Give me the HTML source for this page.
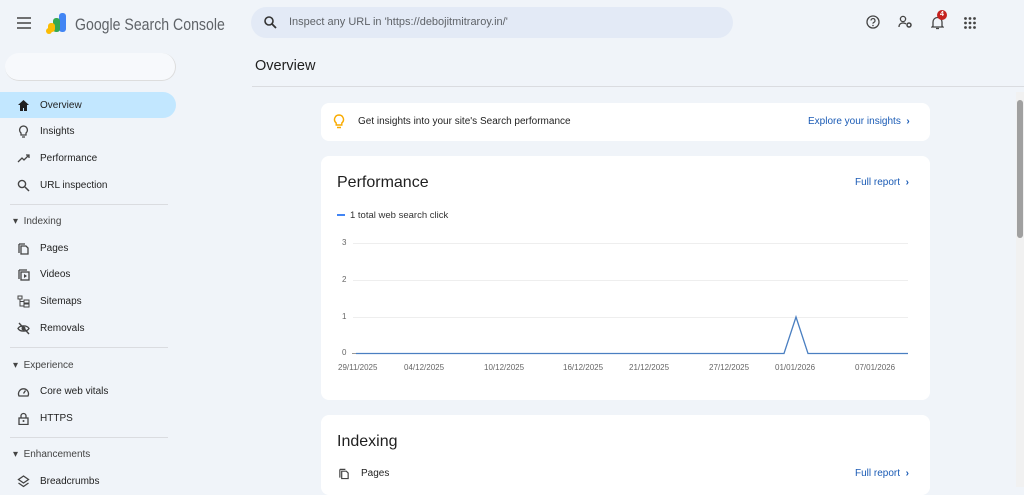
<!DOCTYPE html>
<html><head><meta charset="utf-8"><style>
*{box-sizing:border-box;margin:0;padding:0}
body{width:1024px;height:487px;overflow:hidden;background:#f0f4f9;font-family:"Liberation Sans",sans-serif;color:#1f1f1f;position:relative}
.abs{position:absolute}
.nav{position:absolute;left:0;width:176px;height:26px;display:flex;align-items:center;font-size:10px;color:#1f1f1f}
.nav svg{position:absolute;left:17px;width:13px;height:13px}
.nav span{position:absolute;left:40px}
.sec{position:absolute;left:13px;font-size:10px;color:#444}
.hr{position:absolute;left:10px;width:158px;height:1px;background:#dadce0}
.card{position:absolute;background:#fff;border-radius:8px;left:321px;width:609px}
.blue{color:#1a5bb5;font-size:10px}
.yl{position:absolute;left:342px;font-size:8px;color:#666}
.xl{position:absolute;top:363px;font-size:8px;color:#666}
</style></head><body>
<svg class="abs" style="left:17px;top:17px" width="14" height="12" viewBox="0 0 14 12"><path d="M0 1h14M0 6h14M0 11h14" stroke="#444" stroke-width="1.5"/></svg>
<svg class="abs" style="left:45px;top:13px" width="22" height="22" viewBox="0 0 22 22"><rect x="14" y="0" width="7" height="19" rx="3" fill="#4285f4"/><rect x="8" y="5" width="7" height="14" rx="3" fill="#34a853"/><rect x="3" y="10" width="7" height="9" rx="3" fill="#fbbc04"/><circle cx="4" cy="18" r="3" fill="#fbbc04"/></svg>
<div class="abs" style="left:75px;top:15px;font-size:17px;color:#5f6368;transform:scaleX(0.83);transform-origin:0 0;white-space:nowrap">Google Search Console</div>
<div class="abs" style="left:251px;top:7px;width:482px;height:31px;border-radius:16px;background:#e3eaf6"></div>
<svg class="abs" style="left:264px;top:16px" width="13" height="13" viewBox="0 0 13 13"><circle cx="5" cy="5" r="4" fill="none" stroke="#333" stroke-width="1.6"/><path d="M8 8l4 4" stroke="#333" stroke-width="1.8"/></svg>
<div class="abs" style="left:289px;top:16px;font-size:11px;color:#5f6368">Inspect any URL in 'https://debojitmitraroy.in/'</div>
<svg class="abs" style="left:866px;top:15px" width="14" height="14" viewBox="0 0 14 14"><circle cx="7" cy="7" r="6" fill="none" stroke="#444" stroke-width="1.3"/><path d="M5 5.5a2 2 0 1 1 2.5 2c-.5.2-.5.6-.5 1.2" fill="none" stroke="#444" stroke-width="1.2"/><circle cx="7" cy="10.5" r=".8" fill="#444"/></svg>
<svg class="abs" style="left:898px;top:15px" width="15" height="14" viewBox="0 0 15 14"><circle cx="5" cy="4" r="2.6" fill="none" stroke="#444" stroke-width="1.3"/><path d="M1 12c0-3 2-4 4-4s2.5.5 3 1" fill="none" stroke="#444" stroke-width="1.3"/><circle cx="11" cy="10" r="2" fill="none" stroke="#444" stroke-width="1.5"/></svg>
<svg class="abs" style="left:931px;top:15px" width="13" height="15" viewBox="0 0 13 15"><path d="M2 11V7a4.5 4.5 0 0 1 9 0v4l1 1H1z" fill="none" stroke="#444" stroke-width="1.3"/><path d="M5 13.5h3" stroke="#444" stroke-width="1.3"/></svg>
<div class="abs" style="left:937px;top:10px;width:10px;height:10px;border-radius:50%;background:#c5221f;color:#fff;font-size:7px;font-weight:bold;text-align:center;line-height:10px">4</div>
<svg class="abs" style="left:964px;top:17px" width="12" height="12" viewBox="0 0 12 12" fill="#444"><circle cx="1.5" cy="1.5" r="1.4"/><circle cx="6" cy="1.5" r="1.4"/><circle cx="10.5" cy="1.5" r="1.4"/><circle cx="1.5" cy="6" r="1.4"/><circle cx="6" cy="6" r="1.4"/><circle cx="10.5" cy="6" r="1.4"/><circle cx="1.5" cy="10.5" r="1.4"/><circle cx="6" cy="10.5" r="1.4"/><circle cx="10.5" cy="10.5" r="1.4"/></svg>
<div class="abs" style="left:5px;top:53px;width:171px;height:28px;border-radius:14px;background:#f7f9fc;border-right:1px solid #ddd;border-bottom:1px solid #ddd"></div>
<div class="abs" style="left:0;top:92px;width:176px;height:26px;border-radius:0 13px 13px 0;background:#c2e7ff"></div>
<div class="nav" style="top:92px"><svg viewBox="0 0 13 13"><path d="M6.5 1L1 6h2v6h3V9h1v3h3V6h2z" fill="#1f1f1f"/></svg><span>Overview</span></div>
<div class="nav" style="top:118px"><svg viewBox="0 0 13 13"><path d="M6.5 1a4 4 0 0 0-2.5 7v2h5V8a4 4 0 0 0-2.5-7zM5 12h3" fill="none" stroke="#444" stroke-width="1.3"/></svg><span>Insights</span></div>
<div class="nav" style="top:145px"><svg viewBox="0 0 13 13"><path d="M1 10l4-4 2 2 5-5M9 3h3v3" fill="none" stroke="#444" stroke-width="1.3"/></svg><span>Performance</span></div>
<div class="nav" style="top:172px"><svg viewBox="0 0 13 13"><circle cx="5" cy="5" r="3.6" fill="none" stroke="#444" stroke-width="1.4"/><path d="M8 8l4 4" stroke="#444" stroke-width="1.5"/></svg><span>URL inspection</span></div>
<div class="hr" style="top:204px"></div>
<div class="sec" style="top:216px">▾&nbsp; Indexing</div>
<div class="nav" style="top:235px"><svg viewBox="0 0 13 13"><path d="M2 2v9M2 2h6M4 4h5l2 2v6H4z" fill="none" stroke="#444" stroke-width="1.3"/></svg><span>Pages</span></div>
<div class="nav" style="top:261px"><svg viewBox="0 0 13 13"><path d="M2 2v9M2 2h8" fill="none" stroke="#444" stroke-width="1.3"/><rect x="4" y="4" width="8" height="8" fill="none" stroke="#444" stroke-width="1.3"/><path d="M7 6v4l3-2z" fill="#444"/></svg><span>Videos</span></div>
<div class="nav" style="top:288px"><svg viewBox="0 0 13 13"><rect x="1" y="1" width="4" height="3" fill="none" stroke="#444"/><rect x="7" y="5" width="5" height="3" fill="none" stroke="#444"/><rect x="7" y="9" width="5" height="3" fill="none" stroke="#444"/><path d="M3 4v7h4M3 6.5h4" fill="none" stroke="#444"/></svg><span>Sitemaps</span></div>
<div class="nav" style="top:315px"><svg viewBox="0 0 13 13"><path d="M1 6.5C3 3 10 3 12 6.5 10 10 3 10 1 6.5z" fill="none" stroke="#444" stroke-width="1.3"/><circle cx="6.5" cy="6.5" r="2" fill="#444"/><path d="M2 1l10 11" stroke="#444" stroke-width="1.4"/></svg><span>Removals</span></div>
<div class="hr" style="top:347px"></div>
<div class="sec" style="top:360px">▾&nbsp; Experience</div>
<div class="nav" style="top:378px"><svg viewBox="0 0 13 13"><path d="M2 11a5 5 0 1 1 9 0z" fill="none" stroke="#444" stroke-width="1.3"/><path d="M6.5 8.5l2-3" stroke="#444" stroke-width="1.3"/></svg><span>Core web vitals</span></div>
<div class="nav" style="top:405px"><svg viewBox="0 0 13 13"><rect x="2" y="6" width="9" height="6.5" fill="none" stroke="#444" stroke-width="1.3"/><path d="M4 6V4a2.5 2.5 0 0 1 5 0v2" fill="none" stroke="#444" stroke-width="1.3"/><circle cx="6.5" cy="9" r="1" fill="#444"/></svg><span>HTTPS</span></div>
<div class="hr" style="top:437px"></div>
<div class="sec" style="top:449px">▾&nbsp; Enhancements</div>
<div class="nav" style="top:468px"><svg viewBox="0 0 13 13"><path d="M6.5 1l5 3.5-5 3.5-5-3.5zM1.5 8l5 3.5 5-3.5" fill="none" stroke="#444" stroke-width="1.3"/></svg><span>Breadcrumbs</span></div>
<div class="abs" style="left:255px;top:58px;font-size:14.5px;color:#1f1f1f">Overview</div>
<div class="abs" style="left:252px;top:86px;width:772px;height:1px;background:#dadce0"></div>
<div class="abs" style="left:1016px;top:92px;width:8px;height:395px;background:#f1f1f1"></div>
<div class="abs" style="left:1017px;top:100px;width:6px;height:138px;border-radius:3px;background:#a0a0a0"></div>
<div class="card" style="top:103px;height:38px"></div>
<svg class="abs" style="left:333px;top:114px" width="12" height="15" viewBox="0 0 12 15"><path d="M6 1a4.5 4.5 0 0 0-2.8 8v2h5.6V9A4.5 4.5 0 0 0 6 1zM4 13.5h4" fill="none" stroke="#f9ab00" stroke-width="1.4"/></svg>
<div class="abs" style="left:358px;top:116px;font-size:10px">Get insights into your site's Search performance</div>
<div class="abs blue" style="left:808px;top:116px">Explore your insights&nbsp;&nbsp;<b>›</b></div>
<div class="card" style="top:156px;height:244px"></div>
<div class="abs" style="left:337px;top:174px;font-size:16px;color:#1f1f1f">Performance</div>
<div class="abs blue" style="left:855px;top:177px">Full report&nbsp;&nbsp;<b>›</b></div>
<div class="abs" style="left:337px;top:214px;width:8px;height:2px;background:#4285f4"></div>
<div class="abs" style="left:350px;top:210px;font-size:9.5px;color:#333">1 total web search click</div>
<div class="yl" style="top:238px">3</div><div class="yl" style="top:275px">2</div><div class="yl" style="top:312px">1</div><div class="yl" style="top:348px">0</div>
<svg class="abs" style="left:340px;top:235px" width="580" height="125"><path d="M13 8.5H568M13 45.5H568M13 82.5H568" stroke="#eee"/><path d="M12 118.5H16" stroke="#999"/><path d="M16 118.5H444L456 82 468 118.5H568" fill="none" stroke="#4a7fc1" stroke-width="1.3"/></svg>
<div class="xl" style="left:338px">29/11/2025</div><div class="xl" style="left:404px">04/12/2025</div><div class="xl" style="left:484px">10/12/2025</div><div class="xl" style="left:563px">16/12/2025</div><div class="xl" style="left:629px">21/12/2025</div><div class="xl" style="left:709px">27/12/2025</div><div class="xl" style="left:775px">01/01/2026</div><div class="xl" style="left:855px">07/01/2026</div>
<div class="card" style="top:415px;height:80px"></div>
<div class="abs" style="left:337px;top:433px;font-size:16px">Indexing</div>
<svg class="abs" style="left:338px;top:467px" width="12" height="13" viewBox="0 0 13 13"><path d="M2 2v9M2 2h6M4 4h5l2 2v6H4z" fill="none" stroke="#444" stroke-width="1.3"/></svg>
<div class="abs" style="left:361px;top:468px;font-size:10px">Pages</div>
<div class="abs blue" style="left:855px;top:468px">Full report&nbsp;&nbsp;<b>›</b></div>
</body></html>
